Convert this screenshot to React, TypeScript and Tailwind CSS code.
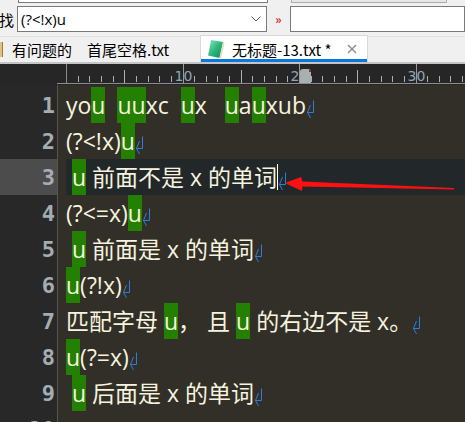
import React from "react";

type Seg = { t: string; h?: boolean };
type Line = { segs: Seg[]; cur?: boolean; caret?: boolean };

const lines: Line[] = [
  { segs: [{ t: "yo" }, { t: "u", h: true }, { t: "  " }, { t: "uu", h: true }, { t: "xc  " }, { t: "u", h: true }, { t: "x   " }, { t: "u", h: true }, { t: "a" }, { t: "u", h: true }, { t: "xub" }] },
  { segs: [{ t: "(?<!x)" }, { t: "u", h: true }] },
  { segs: [{ t: " " }, { t: "u", h: true }, { t: " 前面不是 x 的单词" }], cur: true, caret: true },
  { segs: [{ t: "(?<=x)" }, { t: "u", h: true }] },
  { segs: [{ t: " " }, { t: "u", h: true }, { t: " 前面是 x 的单词" }] },
  { segs: [{ t: "u", h: true }, { t: "(?!x)" }] },
  { segs: [{ t: "匹配字母 " }, { t: "u", h: true }, { t: "， 且 " }, { t: "u", h: true }, { t: " 的右边不是 x。" }] },
  { segs: [{ t: "u", h: true }, { t: "(?=x)" }] },
  { segs: [{ t: " " }, { t: "u", h: true }, { t: " 后面是 x 的单词" }] },
  { segs: [{ t: " " }] },
];

function Ret() {
  return (
    <svg width="9" height="19" viewBox="0 0 9 19" className="mt-[13px] shrink-0" fill="none" stroke="#2a7fdc" strokeWidth="1">
      <path d="M7.5 0.5 V12.5 H1.5 M4.5 5 L1.5 12.5 L4.5 18" />
    </svg>
  );
}

function Ruler() {
  const ticks = [];
  const nums = [];
  for (let i = 1; i <= 34; i++) {
    const x = Math.round(66 + 11.65 * i) + 0.5;
    if (i % 10 === 0) {
      ticks.push(<line key={i} x1={x} x2={x} y1={0} y2={20} stroke="#9a9a9a" />);
      nums.push(
        <text key={"n" + i} x={x} y={17} textAnchor="middle" fontSize="14" fill="#8aa6bb" fontFamily="'DejaVu Sans', sans-serif">
          {i}
        </text>
      );
    } else if (i % 5 === 0) {
      ticks.push(<line key={i} x1={x} x2={x} y1={6} y2={20} stroke="#b0b0b0" />);
    } else {
      ticks.push(<line key={i} x1={x} x2={x} y1={12} y2={18} stroke="#b0b0b0" />);
    }
  }
  return (
    <svg width="465" height="21" className="block">
      <rect x="0" y="0" width="465" height="21" fill="#262626" />
      <line x1="66.5" x2="66.5" y1="0" y2="20" stroke="#8a8a8a" />
      {ticks}
      {nums}
      <path d="M300 20 V8 Q300 5 303 5 H308 Q311 5 311 8 V20 Z" fill="#a8b0b0" />
      <rect x="309" y="6" width="2" height="2" fill="#b02020" />
      <line x1="57" x2="465" y1="19.5" y2="19.5" stroke="#8c8c8c" />
    </svg>
  );
}

export default function App() {
  const edFont = { fontFamily: "'Open Sans', 'Noto Sans CJK SC', sans-serif" };
  return (
    <div className="relative w-[465px] h-[422px] overflow-hidden bg-[#f0f0f0]" style={{ fontFamily: "'Noto Sans CJK SC', sans-serif" }}>
      {/* toolbar row 0 (partial) */}
      <div className="flex h-[3px]">
        <div className="ml-[18px] w-[250px] h-[3px] bg-white border-x border-b border-[#7a7a7a]" />
        <div className="ml-[23px] w-[156px] h-[3px] bg-[#e6e6e6] border-x border-b border-[#adadad]" />
      </div>
      {/* toolbar row 1 */}
      <div className="flex items-center h-[26px] mt-[3px]">
        <div className="w-[18px] -ml-[1px] text-[15px] leading-none text-black">找</div>
        <div className="flex items-center w-[250px] h-[26px] border border-[#7a7a7a] bg-white pl-[3px]">
          <span className="flex-1 text-[15px] leading-none text-black" style={{ fontFamily: "'Open Sans', sans-serif" }}>(?&lt;!x)u</span>
          <svg width="10" height="6" viewBox="0 0 10 6" className="mr-[5px]" fill="none" stroke="#555" strokeWidth="1">
            <path d="M0.5 0.5 L5 5 L9.5 0.5" />
          </svg>
        </div>
        <div className="w-[23px] flex justify-center text-[12px] leading-none text-[#d42a22] font-bold">»</div>
        <div className="flex-1 h-[26px] border border-[#7a7a7a] bg-white" />
      </div>
      {/* tab bar */}
      <div className="flex items-end h-[30px] pt-[3px]">
        <div className="flex items-center w-[200px] h-[26px] border-t border-[#e2e2e2]">
          <div className="w-[3px] h-[15px] bg-[#e3c27a] border-r border-[#9a7a40]" />
          <span className="ml-[9px] text-[15px] leading-none text-black">有问题的　首尾空格.txt</span>
        </div>
        <div className="relative flex items-center w-[168px] h-[27px] bg-white border-t border-x border-[#d9d9d9]">
          <svg width="18" height="20" viewBox="0 0 18 20" className="ml-[6px]">
            <defs>
              <linearGradient id="nb" x1="0" y1="0" x2="1" y2="1">
                <stop offset="0" stopColor="#8ee8c0" />
                <stop offset="0.5" stopColor="#2fb67c" />
                <stop offset="1" stopColor="#128a55" />
              </linearGradient>
            </defs>
            <path d="M4 1 L16 3 L12.5 19 L1 16.5 Z" fill="url(#nb)" />
            <path d="M12.5 19 L16 3 L17.5 4.5 L14.2 19.5 Z" fill="#e9dfc0" />
          </svg>
          <span className="ml-[7px] text-[15px] leading-none text-black">无标题-13.txt *</span>
          <svg width="10" height="10" viewBox="0 0 10 10" className="ml-[15px]" stroke="#8a8a8a" strokeWidth="1.4">
            <path d="M1 1 L9 9 M9 1 L1 9" />
          </svg>
          <div className="absolute left-0 right-0 bottom-0 h-[3px] bg-[#0a78dc]" />
        </div>
        <div className="flex-1 h-[26px] border-t border-[#e2e2e2]" />
      </div>
      <div className="h-[2px] bg-[#c4c4c4]" />
      <Ruler />
      {/* editor */}
      <div className="flex h-[338px] bg-[#322f29]">
        <div className="w-[57px] bg-[#282828] pt-[2px] shrink-0">
          {lines.map((l, i) => (
            <div
              key={i}
              className={"h-[36px] flex items-center justify-end pr-[2px] text-[22px] font-bold text-[#a3adb2] " + (l.cur ? "bg-[#4c4c4c]" : "")}
              style={{ fontFamily: "'DejaVu Sans Mono', monospace" }}
            >
              {i + 1}
            </div>
          ))}
        </div>
        <div className="w-px bg-[#555] shrink-0" />
        <div className="flex-1 pt-[2px]" style={edFont}>
          {lines.map((l, i) => (
            <div key={i} className={"ml-[8px] h-[36px] flex items-stretch text-[23px] text-[#f6f3de] whitespace-pre " + (l.cur ? "bg-[#22272a]" : "")}>
              {l.segs.map((s, j) => (
                <span key={j} className={"flex items-center leading-none " + (s.h ? "bg-[#238000]" : "")}>
                  <span className="whitespace-pre">{s.t}</span>
                </span>
              ))}
              {l.caret && <div className="w-px h-[26px] mt-[5px] bg-white shrink-0" />}
              <Ret />
            </div>
          ))}
        </div>
      </div>
      {/* red arrow annotation */}
      <svg className="absolute left-0 top-0 pointer-events-none" width="465" height="422">
        <path d="M285 183 L301 177 L302.5 181.5 L454 188 L454 189.5 L302.5 186.5 L302 191 Z" fill="#ff1010" />
      </svg>
    </div>
  );
}
